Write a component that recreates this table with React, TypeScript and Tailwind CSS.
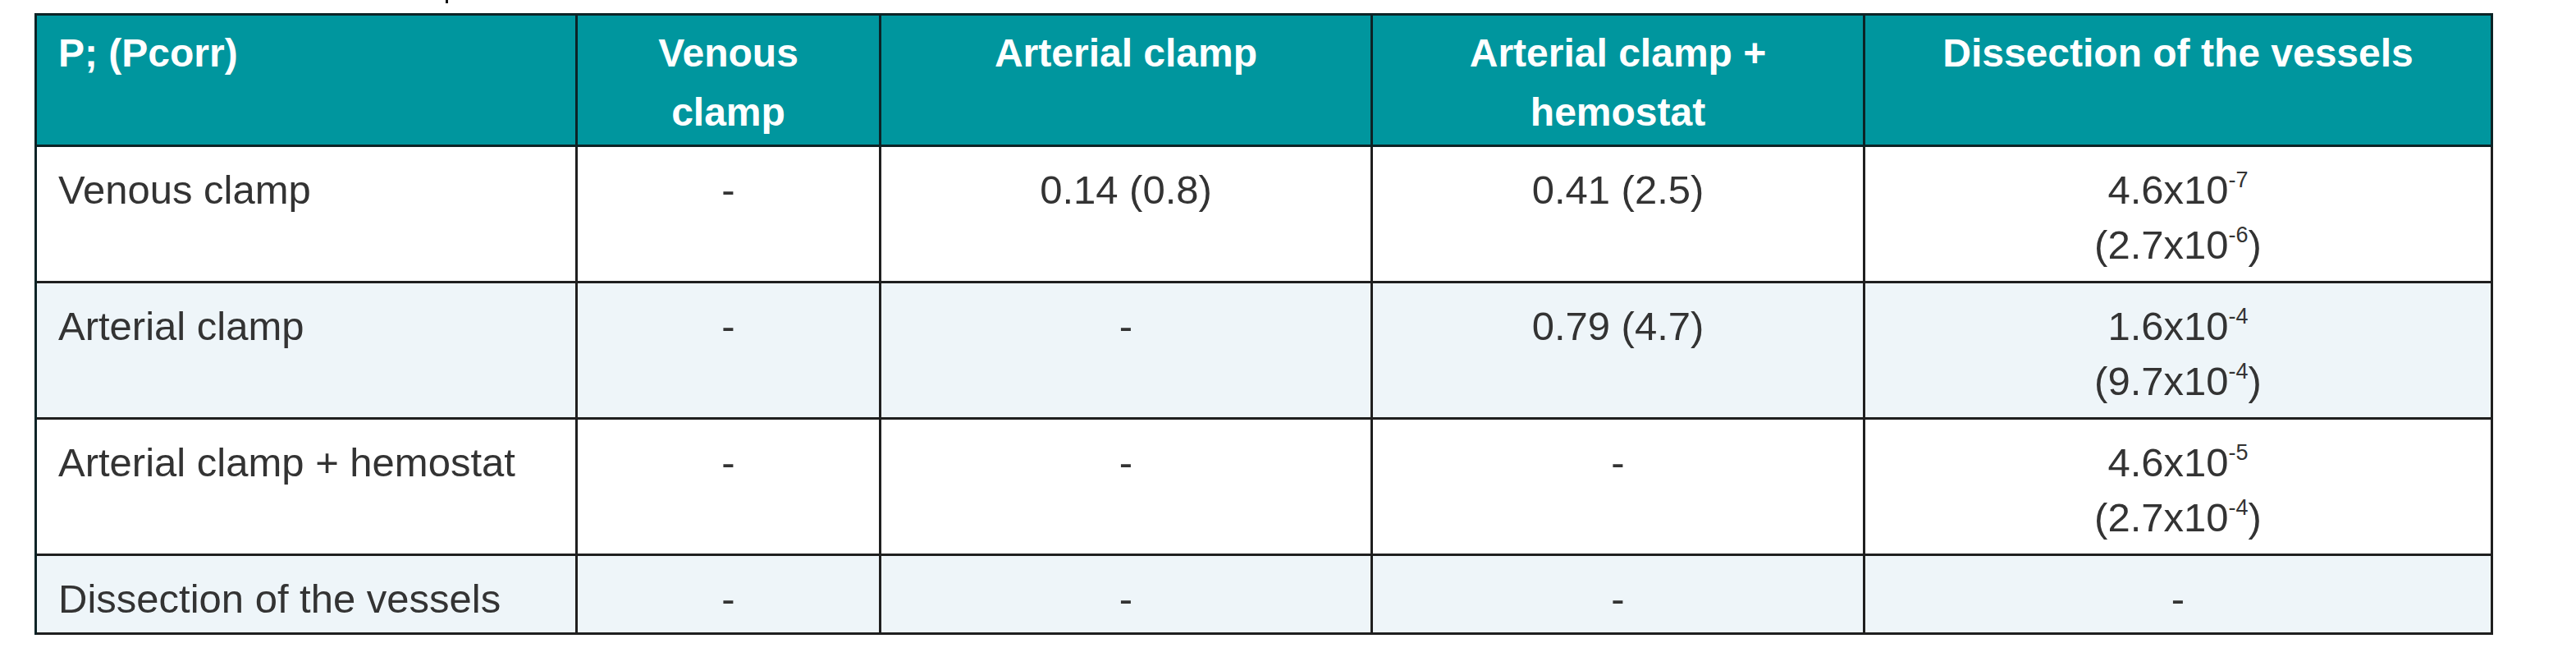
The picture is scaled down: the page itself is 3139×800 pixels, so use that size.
import React from 'react'

// P values (corrected) between hemostasis techniques
type Cell = { main: string; exp?: string; corr?: string; corrExp?: string } | null

interface Row {
  label: string
  cells: Cell[]
}

const headers = ['P; (Pcorr)', 'Venous clamp', 'Arterial clamp', 'Arterial clamp + hemostat', 'Dissection of the vessels']

const rows: Row[] = [
  {
    label: 'Venous clamp',
    cells: [null, { main: '0.14 (0.8)' }, { main: '0.41 (2.5)' }, { main: '4.6x10', exp: '-7', corr: '(2.7x10', corrExp: '-6' }],
  },
  {
    label: 'Arterial clamp',
    cells: [null, null, { main: '0.79 (4.7)' }, { main: '1.6x10', exp: '-4', corr: '(9.7x10', corrExp: '-4' }],
  },
  {
    label: 'Arterial clamp + hemostat',
    cells: [null, null, null, { main: '4.6x10', exp: '-5', corr: '(2.7x10', corrExp: '-4' }],
  },
  {
    label: 'Dissection of the vessels',
    cells: [null, null, null, null],
  },
]

function Sup({ children }: { children: React.ReactNode }) {
  return <span className="relative -top-[20px] text-[27px] leading-none">{children}</span>
}

function Value({ cell }: { cell: Cell }) {
  if (!cell) return <div>-</div>
  return (
    <>
      <div>
        {cell.main}
        {cell.exp && <Sup>{cell.exp}</Sup>}
      </div>
      {cell.corr && (
        <div>
          {cell.corr}
          <Sup>{cell.corrExp}</Sup>)
        </div>
      )}
    </>
  )
}

export default function App() {
  return (
    <div className="min-h-[800px] w-[3139px] bg-white font-['Liberation_Sans',Arial,sans-serif]">
      <div className="ml-[543px] h-[4px] w-[3px] bg-[#111]" />
      <div className="mt-[12px] ml-[42px] grid w-[2996px] grid-cols-[659px_370px_599px_600px_765px] border-l-[3px] border-t-[3px] border-[#0c2326]">
        {headers.map((h, i) => (
          <div
            key={h}
            className={`border-r-[3px] border-b-[3px] border-[#0c2326] bg-[#00969e] pt-[10px] pb-[3px] text-[48px] leading-[72px] font-bold text-white ${
              i === 0 ? 'pl-[26px] text-left' : 'px-[26px] text-center'
            }`}
          >
            {h}
          </div>
        ))}

        {rows.map((row, r) => {
          const bg = r % 2 === 1 ? 'bg-[#eef5f9]' : 'bg-white'
          const pb = r === rows.length - 1 ? 'pb-[7px]' : 'pb-[10px]'
          return (
            <React.Fragment key={row.label}>
              <div className={`${bg} ${pb} border-r-[3px] border-b-[3px] border-[#1f1f1f] pt-[19px] pl-[26px] text-[49px] leading-[67px] text-[#333333]`}>
                {row.label}
              </div>
              {row.cells.map((c, ci) => (
                <div
                  key={ci}
                  className={`${bg} ${pb} border-r-[3px] border-b-[3px] border-[#1f1f1f] pt-[19px] text-center text-[49px] leading-[67px] text-[#333333]`}
                >
                  <Value cell={c} />
                </div>
              ))}
            </React.Fragment>
          )
        })}
      </div>
    </div>
  )
}
